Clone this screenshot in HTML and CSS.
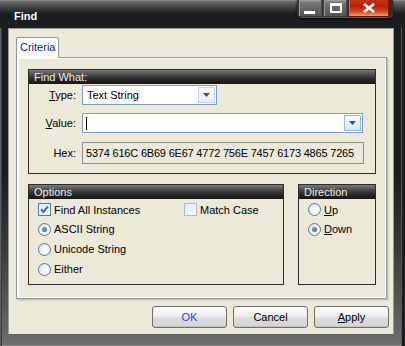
FILE: index.html
```html
<!DOCTYPE html>
<html lang="en">
<head>
  <meta charset="UTF-8">
  <title>Find</title>
  <link rel="stylesheet" href="styles.css">
</head>
<body>
  <div class="window">
    <div class="titlebar">
      <span class="title">Find</span>
      <div class="caps">
        <span class="cap min"><i></i></span>
        <span class="cap max"><i></i></span>
        <span class="cap close">
          <svg width="14" height="10" viewBox="0 0 14 10"><path d="M2 1 L12 9 M12 1 L2 9" stroke="#fff" stroke-width="2.6" fill="none"/></svg>
        </span>
      </div>
    </div>

    <div class="client">
      <div class="tabs"><span class="tab">Criteria</span></div>
      <div class="panel">
        <div class="group findwhat">
          <div class="group-title">Find What:</div>
          <div class="fw-body">
            <label class="lbl"><u>T</u>ype:</label>
            <div class="select type-select">
              <span class="sel-text">Text String</span>
              <span class="dd"><svg width="7" height="4" viewBox="0 0 7 4"><path d="M0 0 H7 L3.5 4 Z" fill="#4d4d4d"/></svg></span>
            </div>
            <label class="lbl"><u>V</u>alue:</label>
            <div class="select value-select">
              <span class="sel-text"><span class="caret"></span></span>
              <span class="dd blue"><svg width="7" height="4" viewBox="0 0 7 4"><path d="M0 0 H7 L3.5 4 Z" fill="#2a4cc4"/></svg></span>
            </div>
            <label class="lbl hex-lbl">Hex:</label>
            <div class="hex">5374 616C 6B69 6E67 4772 756E 7457 6173 4865 7265</div>
          </div>
        </div>

        <div class="row2">
          <div class="group options">
            <div class="group-title">Options</div>
            <div class="opt-body">
              <div class="opt first split">
                <span class="item"><span class="check on"><svg width="11" height="11" viewBox="0 0 11 11"><path d="M2 5.5 L4.5 8 L9 2.5" stroke="#3f6e9e" stroke-width="2" fill="none"/></svg></span>Find All Instances</span>
                <span class="item"><span class="check"></span>Match Case</span>
              </div>
              <div class="opt"><span class="radio on"></span>ASCII String</div>
              <div class="opt"><span class="radio"></span>Unicode String</div>
              <div class="opt"><span class="radio"></span>Either</div>
            </div>
          </div>
          <div class="group direction">
            <div class="group-title">Direction</div>
            <div class="opt-body">
              <div class="opt first"><span class="radio"></span><u>U</u>p</div>
              <div class="opt"><span class="radio on"></span><u>D</u>own</div>
            </div>
          </div>
        </div>
      </div>

      <div class="buttons">
        <button class="btn default">OK</button>
        <button class="btn">Cancel</button>
        <button class="btn"><u>A</u>pply</button>
      </div>
    </div>
  </div>
</body>
</html>
```

FILE: styles.css
```css
html, body { margin: 0; padding: 0; }
body { font-family: "Liberation Sans", Arial, sans-serif; font-size: 11px; color: #000; overflow: hidden; }

.window {
  width: 405px; height: 346px; box-sizing: border-box;
  display: flex; flex-direction: column;
  background: linear-gradient(#1b1c1e 0, #1b1c1e 50%, #3a3a3b 72%, #6e6e6e 100%);
  box-shadow: inset 1px 0 #5e5e5e, inset 2px 0 #3a3a3a, inset -3px 0 #1b1c1e, inset -4px 0 #555, inset 0 -1px #8a8a8a;
}

/* title bar */
.titlebar {
  height: 28px; flex: none; display: flex; justify-content: space-between; align-items: flex-start;
  padding-left: 14px;
  background: linear-gradient(#9a9a9a 0, #707070 1px, #4a4b4d 6px, #2a2b2d 11px, #1c1d1f 14px);
}
.title { color: #fff; font-weight: bold; font-size: 11px; line-height: 13px; padding-top: 10px; }
.caps {
  display: flex; margin-right: 12px; padding: 0 3px 1px 1px;
  background: #2e2f31; border-radius: 0 0 5px 5px;
  box-shadow: 0 1px 3px rgba(0,0,0,0.8), inset 0 -1px #5a5a5a;
}
.cap { height: 17px; box-sizing: border-box; display: flex; align-items: center; justify-content: center; border: 1px solid #3a3a3a; border-top: none; }
.cap.min, .cap.max { width: 25px; background: linear-gradient(#a4a4a4 0, #7a7a7a 2px, #666 50%, #545454 100%); box-shadow: inset 1px 0 #999, inset -1px 0 #4a4a4a; }
.cap.min i { display: block; width: 11px; height: 3px; background: #fff; margin: 8px 2px 0 0; }
.cap.max i { display: block; width: 8px; height: 5px; border: 2px solid #fff; border-top-width: 3px; margin-top: -1px; }
.cap.close { width: 42px; background: linear-gradient(#c9301a 0, #b81e08 40%, #d2522a 75%, #eba071 100%); box-shadow: inset 1px 0 #e06a4a, inset -1px 0 #8a1a08; border-color: #5a1a10; }

/* client area */
.client {
  flex: 1; margin: 0 11px 11px 8px; box-sizing: border-box;
  background: #ece9d8; border: 1px solid #9a9a9a; border-bottom-color: #5c5c5c;
  padding: 8px 4px 0 7px;
}
.tabs { display: flex; }
.tab {
  position: relative; z-index: 1; margin-bottom: -1px;
  height: 21px; box-sizing: border-box; line-height: 19px; padding: 0 3px;
  background: #fcfcfe; color: #14286e;
  border: 1px solid #919b9c; border-bottom: none; border-radius: 2px 2px 0 0;
}
.panel {
  height: 242px; box-sizing: border-box; margin-right: 2px;
  border: 1px solid #919b9c; padding: 11px 10px 0 11px;
  box-shadow: inset 2px 1px 0 #fcfcfe, inset -1px -1px 0 #fcfcfe, 1px 1px 0 #c4c1b2, 2px 2px 0 #dad7c8;
}

/* group boxes */
.group { border: 1px solid #2c2c2c; box-sizing: border-box; }
.group-title {
  height: 14px; line-height: 14px; padding-left: 5px; color: #eaeaea;
  background: linear-gradient(#7a7a7a 0, #4a4a4a 35%, #262626 70%, #161616 100%);
}
.findwhat { height: 105px; }
.fw-body {
  display: grid; grid-template-columns: 48px auto; column-gap: 5px; row-gap: 8px;
  align-items: center; padding: 1px 11px 0 0;
}
.lbl { text-align: right; padding-right: 1px; }
.select {
  height: 20px; box-sizing: border-box; display: flex; align-items: center;
  border: 1px solid #7f9db9; background: #fff; padding: 1px;
}
.type-select { width: 135px; }
.value-select { width: 281px; }
.sel-text { flex: 1; padding-left: 3px; display: flex; align-items: center; }
.caret { display: block; width: 1px; height: 13px; background: #000; margin-left: -1px; }
.dd {
  width: 17px; height: 16px; box-sizing: border-box; display: flex; align-items: center; justify-content: center;
  border: 1px solid #c3d3ec; background: linear-gradient(#fbfcfe, #e8eef8);
}
.dd.blue { border-color: #98b6e4; background: linear-gradient(#f4f8fe, #dbe6f6); }
.hex-lbl { margin-top: 1px; }
.hex {
  margin-top: 1px; height: 22px; box-sizing: border-box; line-height: 20px; padding-left: 3px;
  border: 1px solid #8e8e8e; white-space: nowrap; letter-spacing: -0.2px;
}

.row2 { display: flex; gap: 14px; margin-top: 10px; }
.options { width: 256px; height: 101px; }
.direction { width: 78px; height: 101px; }
.opt-body { padding-left: 9px; }
.opt { height: 20px; display: flex; align-items: center; }
.opt.first { height: 19px; margin-top: 1px; }
.split { display: grid; grid-template-columns: 146px auto; }
.item { display: flex; align-items: center; }

.check {
  width: 13px; height: 13px; box-sizing: border-box; margin-right: 3px;
  border: 1px solid #a6bfd9; background: linear-gradient(135deg, #dfe8f2, #fbfdff);
  display: flex; align-items: center; justify-content: center;
}
.check.on { border-color: #4c7cad; }
.radio {
  width: 13px; height: 13px; box-sizing: border-box; margin-right: 3px; border-radius: 50%;
  border: 1px solid #4f7ca8; background: radial-gradient(circle at 65% 65%, #fff 0, #f2f6fa 40%, #c9d9ea 100%);
  display: flex; align-items: center; justify-content: center;
}
.radio.on::after {
  content: ""; width: 5px; height: 5px; border-radius: 50%;
  background: radial-gradient(circle at 40% 40%, #7aa6cf, #2a5c8c);
}

/* buttons */
.buttons { display: flex; justify-content: flex-end; gap: 6px; margin-top: 7px; }
.btn {
  width: 75px; height: 22px; box-sizing: border-box; padding: 0;
  font-family: inherit; font-size: 11px; color: #000;
  border: 1px solid #6e6e6e; border-radius: 3px;
  background: linear-gradient(#fbfbfb 0, #efefef 45%, #dcdcdc 55%, #d4d4d4 100%);
  box-shadow: inset 0 -1px #c4c4c4;
}
.btn.default { color: #1c4bd0; }
```
